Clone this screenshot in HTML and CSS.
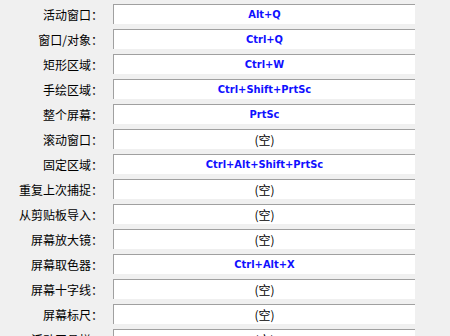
FILE: index.html
```html
<!DOCTYPE html>
<html lang="zh-CN">

<head>
  <meta charset="UTF-8">
  <title>快捷键</title>
  <link rel="stylesheet" href="styles.css">
</head>

<body>
  <div class="hotkeys">
    <div class="row"><label>活动窗口：</label><div class="key">Alt+Q</div></div>
    <div class="row"><label>窗口/对象：</label><div class="key">Ctrl+Q</div></div>
    <div class="row"><label>矩形区域：</label><div class="key">Ctrl+W</div></div>
    <div class="row"><label>手绘区域：</label><div class="key">Ctrl+Shift+PrtSc</div></div>
    <div class="row"><label>整个屏幕：</label><div class="key">PrtSc</div></div>
    <div class="row"><label>滚动窗口：</label><div class="key empty">(空)</div></div>
    <div class="row"><label>固定区域：</label><div class="key">Ctrl+Alt+Shift+PrtSc</div></div>
    <div class="row"><label>重复上次捕捉：</label><div class="key empty">(空)</div></div>
    <div class="row"><label>从剪贴板导入：</label><div class="key empty">(空)</div></div>
    <div class="row"><label>屏幕放大镜：</label><div class="key empty">(空)</div></div>
    <div class="row"><label>屏幕取色器：</label><div class="key">Ctrl+Alt+X</div></div>
    <div class="row"><label>屏幕十字线：</label><div class="key empty">(空)</div></div>
    <div class="row"><label>屏幕标尺：</label><div class="key empty">(空)</div></div>
    <div class="row"><label>活动工具栏：</label><div class="key empty">(空)</div></div>
  </div>
</body>

</html>
```

FILE: styles.css
```css
body {
  margin: 0;
  background-color: #f0f0f0;
  font-family: "Noto Sans CJK SC", sans-serif;
  font-size: 12px;
  overflow: hidden;
}

.hotkeys {
  display: flex;
  flex-direction: column;
  gap: 5px;
  padding-top: 4px;
}

.row {
  display: flex;
  align-items: center;
  height: 20px;
}

label {
  width: 103px;
  margin-right: 10px;
  text-align: right;
  color: #000;
  white-space: nowrap;
}

.key {
  box-sizing: border-box;
  width: 302px;
  height: 20px;
  background-color: #fff;
  border-top: 1px solid #a0a0a0;
  border-left: 1px solid #a0a0a0;
  display: flex;
  align-items: center;
  justify-content: center;
  font-family: "DejaVu Sans Condensed", "DejaVu Sans", sans-serif;
  font-stretch: condensed;
  font-weight: bold;
  font-size: 11px;
  color: #1010ff;
}

.key.empty {
  font-family: "Noto Sans CJK SC", sans-serif;
  font-stretch: normal;
  font-weight: normal;
  font-size: 12px;
  color: #000;
}
```
